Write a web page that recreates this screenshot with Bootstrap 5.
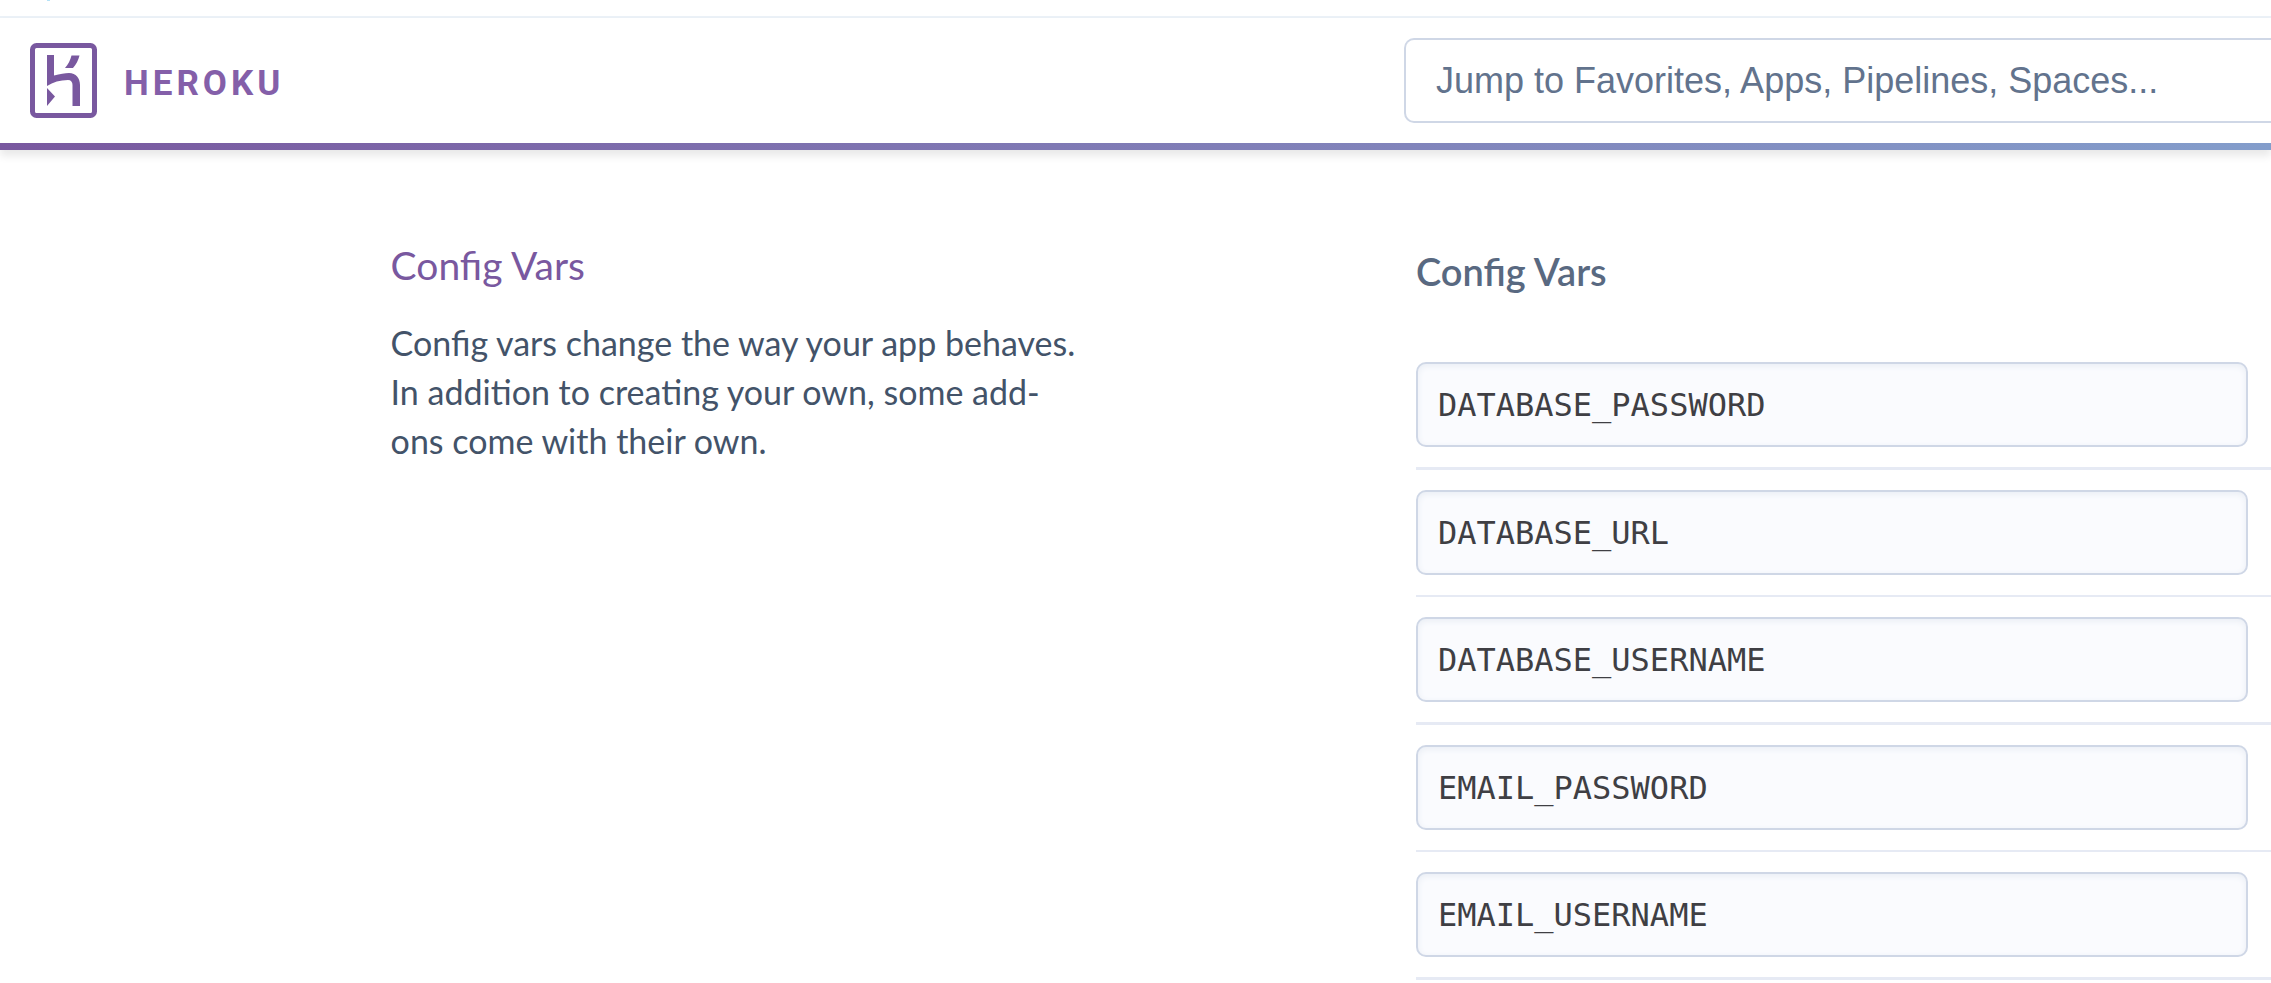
<!DOCTYPE html>
<html lang="en">
<head>
<meta charset="utf-8">
<meta name="viewport" content="width=device-width, initial-scale=1">
<title>Config Vars | Heroku</title>
<link href="https://cdn.jsdelivr.net/npm/bootstrap@5.3.0/dist/css/bootstrap.min.css" rel="stylesheet">
<style>
  body { font-family: Lato, sans-serif; color: #435369; background: #fff; overflow-x: hidden; }
  .top-strip { height: 18px; padding-left: 47px; border-bottom: 2px solid #ebf1f7; }
  .top-mark { width: 3px; height: 1px; background: #b5e2f7; }
  .app-header { padding-top: 20px; box-shadow: 0 6px 8px rgba(0, 0, 0, .09); }
  .split { display: grid; grid-template-columns: minmax(0, 1404fr) minmax(0, 867fr); }
  .brand { gap: 27px; padding: 0 30px; color: #845fa9; font: 700 35px/40px Roboto, sans-serif; letter-spacing: 4px; }
  .brand-label { padding-top: 6px; }
  .jump { height: 85px; padding: 0 30px; border: 2px solid #cfd7e6; border-right: 0; border-radius: 10px 0 0 10px; color: #62738d; font: 36px/44px "Liberation Sans", sans-serif; }
  .jump::placeholder { color: #62738d; opacity: 1; }
  .accent { height: 7px; margin-top: 20px; background: linear-gradient(90deg, #79589f 0%, #8184bb 62%, #839dcb 100%); }
  .settings { display: grid; grid-template-columns: minmax(0, 700fr) minmax(0, 855fr); column-gap: 17.3%; margin-left: 17.2%; padding-top: 91px; }
  .settings-title { color: #79589f; font-size: 39px; line-height: 48px; margin-bottom: 29px; }
  .settings-text { font-size: 34px; line-height: 49px; }
  .vars-title { color: #596981; font-size: 38px; font-weight: 600; line-height: 48px; margin: 6px 0 67px; }
  .var-row { padding: 20px 23px 20px 0; border-bottom: 2px solid #e6eaf4; }
  .var-row:nth-child(odd) { border-bottom-width: 3px; }
  .var-row:first-child { padding-top: 0; }
  .var-key { height: 85px; padding: 0 20px; border: 2px solid #cfd7e6; border-radius: 10px; background: #fafbfe; box-shadow: inset 0 2px 6px #e9edf4; color: #3f3f44; font: 32px/40px "DejaVu Sans Mono", monospace; }
</style>
</head>
<body>
<div class="top-strip"><div class="top-mark"></div></div>
<header class="app-header">
  <div class="split align-items-center">
    <div class="d-flex">
      <a class="brand d-inline-flex align-items-center text-decoration-none" href="#">
        <svg width="67" height="75" viewBox="0 0 67 75" fill="#79589f" aria-hidden="true">
          <rect x="2.5" y="2.5" width="62" height="70" rx="4" fill="none" stroke="#79589f" stroke-width="5"/>
          <path d="M17 12H24V32.500C30 31 35 30 39 30C46 30 50 35 50 42V63H42.500V42C42.500 39 41 37 38 37C30 37 23 39 17 43ZM17 45L25 53.500L17 63ZM41.500 12.500H49.500C48.500 17 46 21.500 43 25H35C38 21.500 40.500 17 41.500 12.500Z"/>
        </svg>
        <span class="brand-label">HEROKU</span>
      </a>
    </div>
    <input class="jump form-control" type="search" aria-label="Jump to" placeholder="Jump to Favorites, Apps, Pipelines, Spaces...">
  </div>
  <div class="accent"></div>
</header>
<main class="settings">
  <section>
    <h1 class="settings-title fw-normal">Config Vars</h1>
    <p class="settings-text mb-0">Config vars change the way your app behaves. In addition to creating your own, some add-ons come with their own.</p>
  </section>
  <section>
    <h2 class="vars-title">Config Vars</h2>
    <form>
      <div class="var-row"><input class="var-key form-control" type="text" aria-label="Key 1" value="DATABASE_PASSWORD" readonly></div>
      <div class="var-row"><input class="var-key form-control" type="text" aria-label="Key 2" value="DATABASE_URL" readonly></div>
      <div class="var-row"><input class="var-key form-control" type="text" aria-label="Key 3" value="DATABASE_USERNAME" readonly></div>
      <div class="var-row"><input class="var-key form-control" type="text" aria-label="Key 4" value="EMAIL_PASSWORD" readonly></div>
      <div class="var-row"><input class="var-key form-control" type="text" aria-label="Key 5" value="EMAIL_USERNAME" readonly></div>
    </form>
  </section>
</main>
<script src="https://cdn.jsdelivr.net/npm/bootstrap@5.3.0/dist/js/bootstrap.bundle.min.js"></script>
</body>
</html>
